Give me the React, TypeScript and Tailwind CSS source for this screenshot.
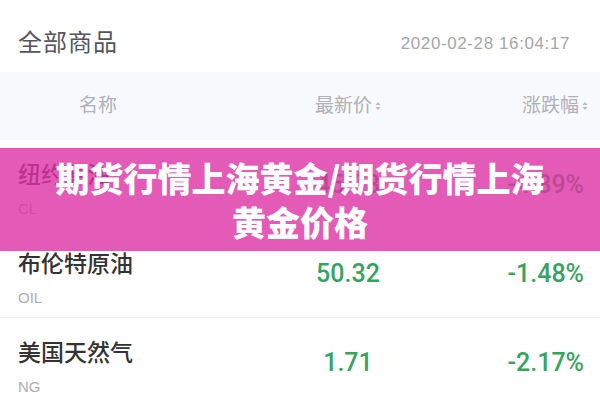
import React from 'react';

type Quote = {
  name: string;
  code: string;
  price: string;
  change: string;
};

const quotes: Quote[] = [
  { name: '纽约原油', code: 'CL', price: '45.08', change: '-4.89%' },
  { name: '布伦特原油', code: 'OIL', price: '50.32', change: '-1.48%' },
  { name: '美国天然气', code: 'NG', price: '1.71', change: '-2.17%' },
];

const font = 'font-["Liberation_Sans","Noto_Sans_CJK_SC",sans-serif]';
const numFont = 'font-["Roboto","Liberation_Sans",sans-serif] font-medium';

function SortIcon() {
  return (
    <svg width="6" height="10" viewBox="0 0 6 10" className="ml-[3px]">
      <path d="M3 1 L5.5 4 H0.5 Z" fill="#b8b8c0" />
      <path d="M3 9 L5.5 6 H0.5 Z" fill="#b8b8c0" />
    </svg>
  );
}

export default function App() {
  return (
    <div className={`relative w-[600px] h-[400px] overflow-hidden bg-white ${font}`}>
      {/* Title bar */}
      <div className="h-[72px] flex items-center justify-between pl-[18px] pr-[30px]">
        <h1 className="text-[24px] tracking-[1px] text-[#55555c] leading-none mt-[14px]">全部商品</h1>
        <span className="text-[17px] tracking-[0.6px] text-[#a5a5ad] leading-none mt-[14px]">
          2020-02-28 16:04:17
        </span>
      </div>

      {/* Column headers */}
      <div className="h-[68px] bg-[#f8f9fc] grid grid-cols-[200px_296px_1fr] items-center text-[19px] text-[#b0b0b8]">
        <div className="text-center pr-[4px]">名称</div>
        <div className="flex items-center justify-center">
          最新价
          <SortIcon />
        </div>
        <div className="flex items-center justify-end pr-[12px]">
          涨跌幅
          <SortIcon />
        </div>
      </div>

      {/* Quote rows */}
      <div>
        {quotes.map((q) => (
          <div
            key={q.code}
            className="h-[89px] grid grid-cols-[200px_296px_1fr] items-center border-b border-[#f0f0f2]"
          >
            <div className="pl-[18px] pt-[10px] flex flex-col">
              <span className='font-["Noto_Sans_CJK_SC",sans-serif] font-medium text-[23px] text-[#333] leading-none mb-[16px]'>
                {q.name}
              </span>
              <span className="text-[15px] text-[#acacb2] leading-none">{q.code}</span>
            </div>
            <div className={`text-center text-[25px] text-[#38a35f] leading-none ${numFont}`}>{q.price}</div>
            <div className={`text-right pr-[16px] text-[25px] text-[#38a35f] leading-none ${numFont}`}>
              {q.change}
            </div>
          </div>
        ))}
      </div>

      {/* Headline banner */}
      <div className="absolute left-0 right-0 top-[148px] h-[103px] bg-[#dc32a4]/80 flex flex-col items-center justify-center">
        <p className='font-["Noto_Sans_CJK_SC","Liberation_Sans",sans-serif] font-black text-white text-[34px] leading-[44px] text-center'>
          <span className="block">期货行情上海黄金/期货行情上海</span>
          <span className="block">黄金价格</span>
        </p>
      </div>
    </div>
  );
}
